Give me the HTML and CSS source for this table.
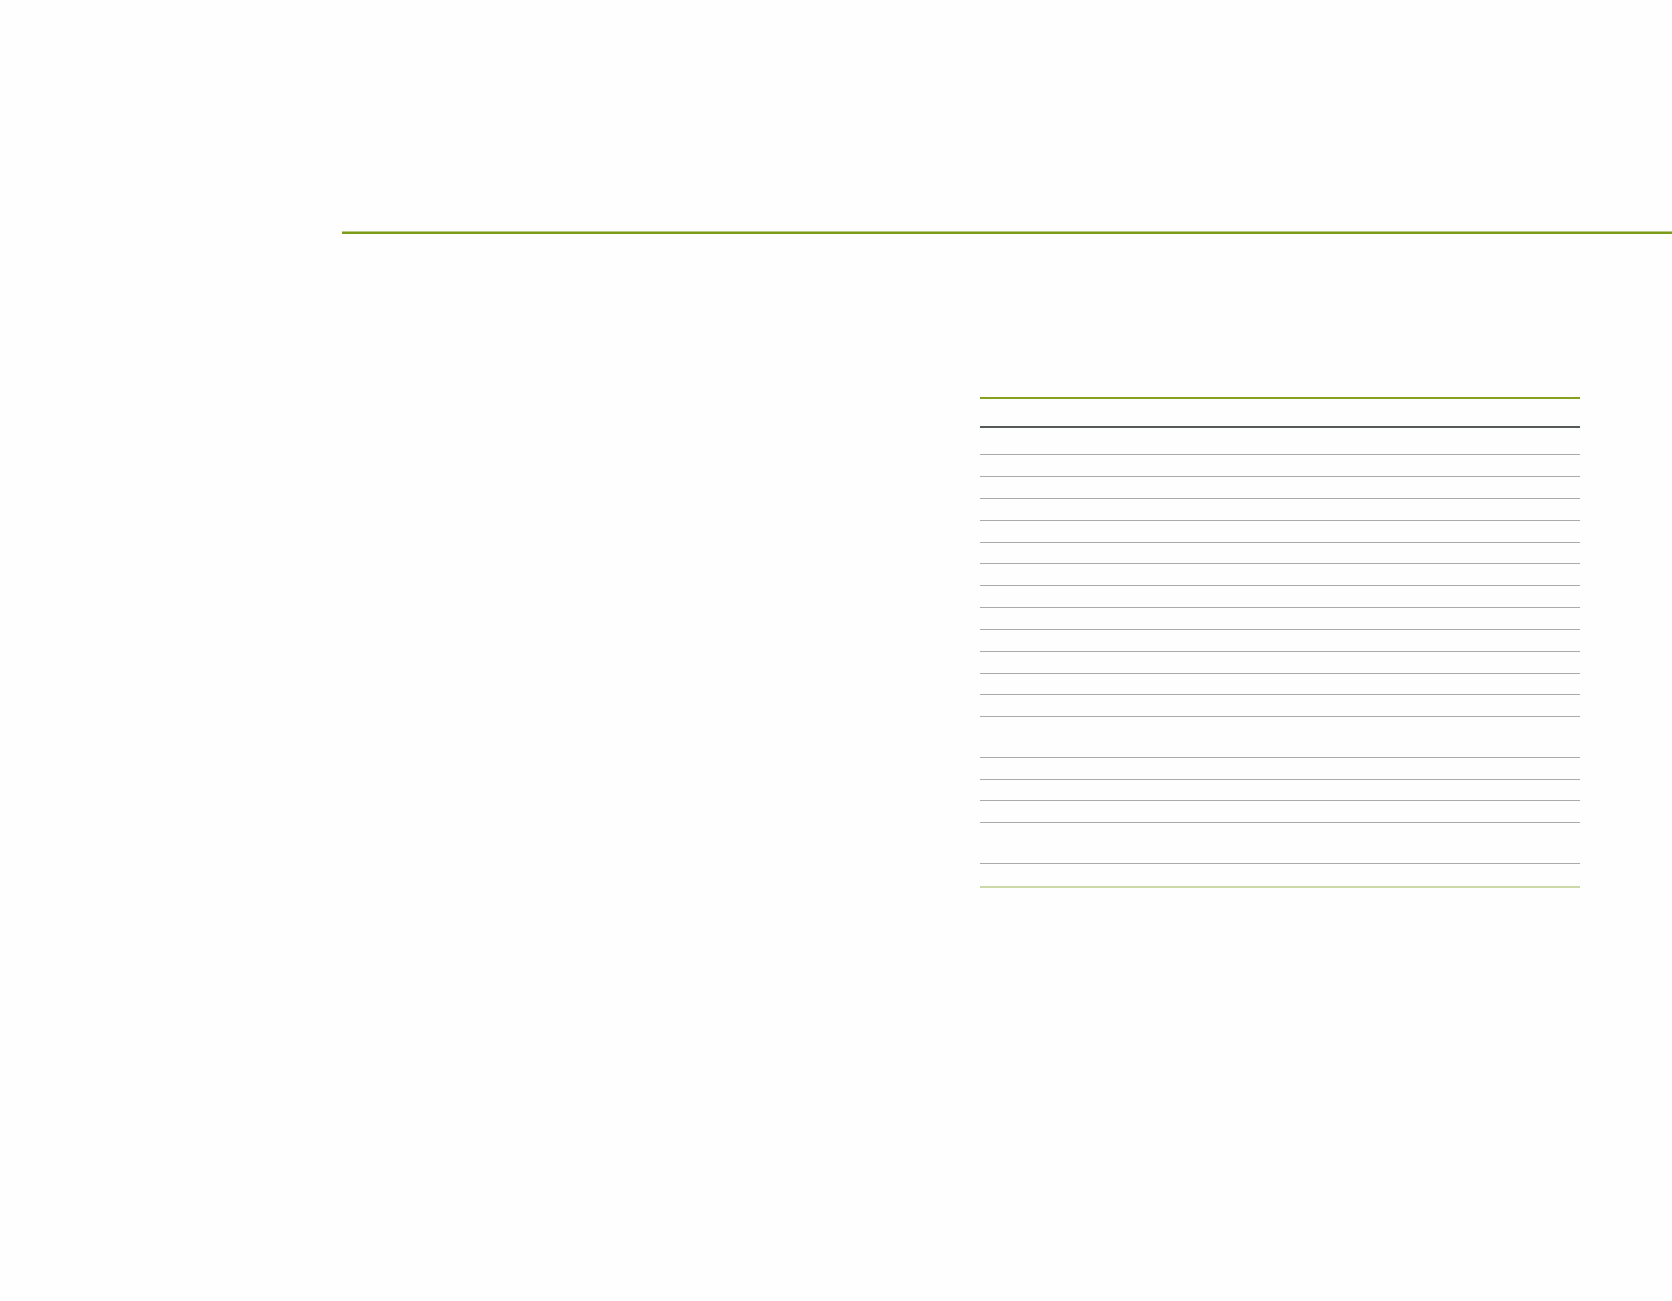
FILE: index.html
```html
<!DOCTYPE html>
<html lang="en">
<head>
<meta charset="utf-8">
<title>Page</title>
<link rel="stylesheet" href="styles.css">
</head>
<body>
<div class="page">
  <div class="rule"></div>
  <div class="content">
    <div class="side"></div>
    <div class="table">
      <div class="thead"></div>
      <div class="row h27"></div>
      <div class="row h22"></div>
      <div class="row h22"></div>
      <div class="row h22"></div>
      <div class="row h22"></div>
      <div class="row h21"></div>
      <div class="row h22"></div>
      <div class="row h22"></div>
      <div class="row h22"></div>
      <div class="row h22"></div>
      <div class="row h22"></div>
      <div class="row h21"></div>
      <div class="row h22"></div>
      <div class="row h41"></div>
      <div class="row h22"></div>
      <div class="row h21"></div>
      <div class="row h22"></div>
      <div class="row h41"></div>
      <div class="row last"></div>
    </div>
  </div>
</div>
</body>
</html>
```
FILE: styles.css
```css
html, body {
  margin: 0;
  padding: 0;
  background: #fefefe;
  font-family: "Liberation Sans", Arial, sans-serif;
}

.page {
  padding-top: 232px;
  min-height: 1069px;
}

.rule {
  margin-left: 342px;
  height: 2px;
  background: #7d9c1c;
  box-shadow: 0 -1px 0 #b8cb86;
}

.content {
  display: flex;
  margin-top: 163px;
}

.side {
  width: 980px;
  flex: none;
}

.table {
  width: 600px;
  flex: none;
  display: flex;
  flex-direction: column;
}

.thead {
  box-sizing: border-box;
  height: 31px;
  border-top: 2px solid #84a11f;
  border-bottom: 2px solid #555a58;
}

.row {
  box-sizing: border-box;
  border-bottom: 1px solid #a9acab;
}

.h21 { height: 21px; }
.h22 { height: 22px; }
.h27 { height: 27px; }
.h41 { height: 41px; }

.row.last {
  height: 24px;
  border-bottom: 2px solid #cbdaa6;
}
```
